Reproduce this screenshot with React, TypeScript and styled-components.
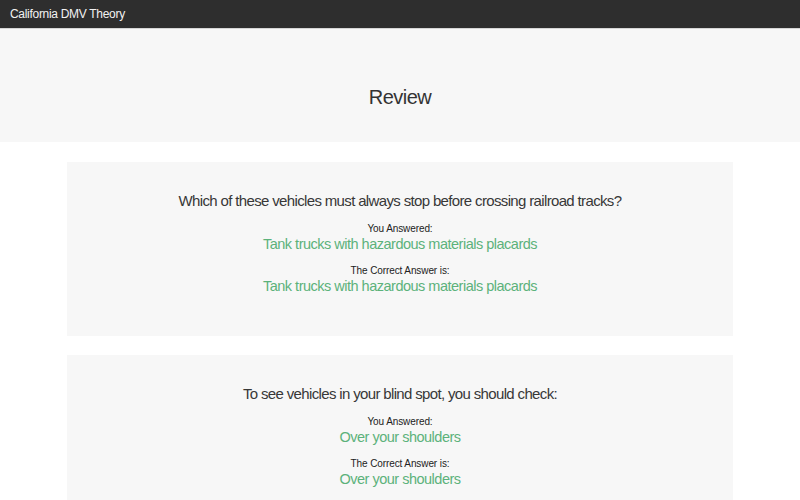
import styled, { createGlobalStyle } from 'styled-components';

const GlobalStyle = createGlobalStyle`
  html, body {
    margin: 0;
    padding: 0;
    background: #ffffff;
    font-family: 'Liberation Sans', Arial, sans-serif;
  }
`;

const questions = [
  {
    question: 'Which of these vehicles must always stop before crossing railroad tracks?',
    answered: 'Tank trucks with hazardous materials placards',
    correct: 'Tank trucks with hazardous materials placards',
  },
  {
    question: 'To see vehicles in your blind spot, you should check:',
    answered: 'Over your shoulders',
    correct: 'Over your shoulders',
  },
];

const App = () => {
  return (
    <Page>
      <GlobalStyle />
      <NavBar>
        <Brand>California DMV Theory</Brand>
      </NavBar>
      <Jumbotron>
        <Title>Review</Title>
      </Jumbotron>
      <Container>
        {questions.map((q, idx) => (
          <Card key={idx}>
            <Question>{q.question}</Question>
            <Label>You Answered:</Label>
            <Answer>{q.answered}</Answer>
            <Label>The Correct Answer is:</Label>
            <Answer>{q.correct}</Answer>
          </Card>
        ))}
      </Container>
    </Page>
  );
};
export default App;

const Page = styled.div`
  min-height: 100vh;
  background: #ffffff;
`;

const NavBar = styled.div`
  height: 28px;
  background: #2e2e2e;
  border-bottom: 1px solid #d6d6d6;
  display: flex;
  align-items: center;
  padding: 0 10px;
`;

const Brand = styled.div`
  color: #f2f2f2;
  font-size: 12px;
  letter-spacing: -0.3px;
`;

const Jumbotron = styled.div`
  height: 113px;
  box-sizing: border-box;
  padding-top: 54px;
  background: #f7f7f7;
  text-align: center;
`;

const Title = styled.h1`
  margin: 0;
  font-weight: 400;
  font-size: 20px;
  line-height: 28px;
  letter-spacing: -0.5px;
  color: #333333;
`;

const Container = styled.div`
  width: 666px;
  margin: 20px auto 0;
  display: flex;
  flex-direction: column;
  gap: 19px;
`;

const Card = styled.div`
  background: #f7f7f7;
  padding: 29px 20px 41px;
  display: flex;
  flex-direction: column;
  align-items: center;
  text-align: center;
`;

const Question = styled.div`
  font-size: 15px;
  line-height: 20px;
  letter-spacing: -0.65px;
  color: #383838;
`;

const Label = styled.div`
  font-size: 10px;
  line-height: 12px;
  color: #222222;
  margin-top: 12px;
  letter-spacing: -0.1px;
`;

const Answer = styled.div`
  font-size: 14.5px;
  line-height: 18px;
  letter-spacing: -0.5px;
  color: #5cb27b;
`;
